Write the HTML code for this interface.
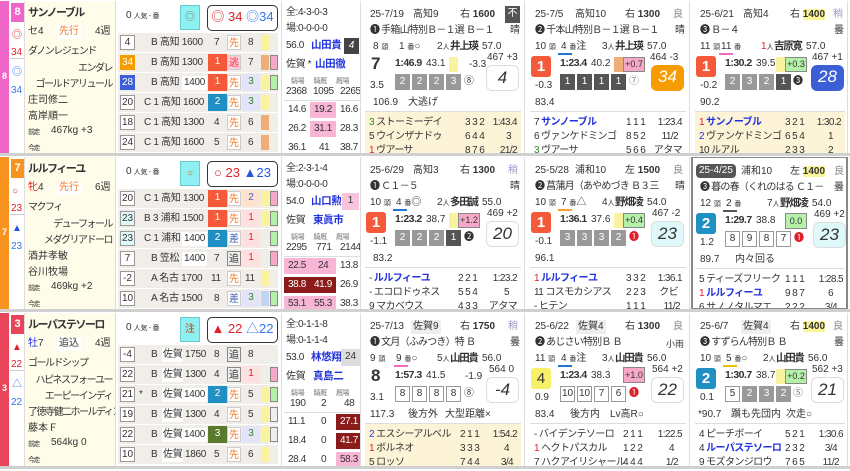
<!DOCTYPE html><html><head><meta charset="utf-8"><style>
*{margin:0;padding:0;box-sizing:border-box}
body{width:850px;height:471px;background:#fff;font-family:"Liberation Sans","Noto Sans CJK JP",sans-serif;font-size:10px;color:#333;position:relative;overflow:hidden}
.row{position:absolute;left:0;width:850px;height:153px}
.sep{position:absolute;left:0;width:850px;height:3px;background:#d0d0d0}
.a{position:absolute;white-space:nowrap;line-height:14px}
.strip{position:absolute;left:0;top:0;width:9px;height:153px;color:#fff;font-size:9px;font-weight:bold;text-align:center;padding-top:70px}
.mk{position:absolute;left:9px;top:0;width:16px;height:153px;background:#fff;border-right:1px solid #ddd}
.nb{position:absolute;left:2px;top:2px;width:13px;height:19px;color:#fff;font-weight:bold;text-align:center;line-height:19px;font-size:11px}
.nm{position:absolute;left:25px;top:0;width:91px;height:153px;background:#fffcea;border-right:1px solid #ddd;overflow:hidden}
.nm .a{letter-spacing:-1.5px}
.od{position:absolute;left:116px;top:0;width:166px;height:153px;background:#fff;border-right:1px solid #ddd}
.od .a{letter-spacing:-0.3px}
.rr{position:absolute;left:2px;width:160px;height:19px;background:#f1eee9}
.bx{position:absolute;text-align:center;line-height:15px}
.st{position:absolute;left:282px;top:0;width:79px;height:153px;border-right:1px solid #ddd;overflow:hidden}
.st .a{letter-spacing:-0.4px}
.race{position:absolute;top:0;width:164px;height:153px;border-right:1px solid #ddd;overflow:hidden}
.cb{position:absolute;top:73px;width:15px;height:16px;background:#999;color:#fff;text-align:center;line-height:16px;font-size:10px}
.cw{background:#fff;color:#333;border:1px solid #999;line-height:14px}
.cd{background:#555}
.fin{position:absolute;left:5px;top:55px;width:20px;height:21px;border-radius:3px;color:#fff;font-size:15px;font-weight:bold;text-align:center;line-height:21px}
.big{position:absolute;left:125px;top:64px;width:33px;height:26px;border:1px solid #ddd;border-radius:6px;font-style:italic;font-size:17px;text-align:center;line-height:24px}
.res{position:absolute;left:4px;top:110px;width:156px;height:43px;border-top:1px solid #ddd}
.res .a{letter-spacing:-0.6px}
.rn{letter-spacing:-0.8px}
.jk{font-weight:bold;font-size:10.5px;letter-spacing:-1.3px}
.sm{font-size:7px}
.blue{color:#2233dd}
.red{color:#e0202a}
.grn{color:#2a8a2a}
b{font-weight:bold}
.tm{font-weight:bold;font-size:10.5px;letter-spacing:-0.5px}
</style></head><body>

<!-- ROW 1 -->
<div class="row" style="top:1px">
<div class="strip" style="background:#f066c8">8</div>
<div class="mk"><div class="nb" style="background:#f066c8">8</div>
<span class="a red" style="left:3px;top:28px">◎</span><span class="a red" style="left:2px;top:45px;font-size:10px">34</span>
<div style="position:absolute;left:1px;top:57px;width:14px;height:1px;background:#ccc"></div>
<span class="a" style="left:3px;top:65px;color:#3377ee">◎</span><span class="a" style="left:2px;top:83px;font-size:10px;color:#3377ee">34</span></div>
<div class="nm">
<span class="a" style="left:3px;top:5px;font-weight:bold;font-size:11px">サンノーブル</span>
<span class="a" style="left:3px;top:24px;letter-spacing:0">セ4</span><span class="a" style="left:32px;top:24px;color:#f07a30;background:#fff;padding:0 2px;letter-spacing:0">先行</span><span class="a" style="left:70px;top:24px;letter-spacing:0">4週</span>
<span class="a" style="left:3px;top:44px">ダノンレジェンド</span>
<span class="a" style="right:3px;top:61px">エンダレ</span>
<span class="a" style="right:3px;top:77px">ゴールドアリュール</span>
<span class="a" style="left:3px;top:93px;letter-spacing:0">庄司修二</span>
<span class="a" style="left:3px;top:109px;letter-spacing:0">高岸順一</span>
<span class="a sm" style="left:3px;top:125px">前走</span><span class="a" style="left:26px;top:123px;letter-spacing:0">467kg +3</span>
<span class="a sm" style="left:3px;top:141px">今走</span></div>
<div class="od">
<span class="a" style="left:10px;top:8px">0 <span class="sm">人気 - 番</span></span>
<div class="bx" style="left:64px;top:4px;width:20px;height:25px;background:#8ef0f2;border:1px solid #6cc;line-height:23px;color:#777">◎</div>
<div class="bx" style="left:91px;top:4px;width:71px;height:26px;border:1.5px solid #333;border-radius:5px;line-height:22px;font-size:13px"><span class="red">◎ 34</span> <span style="color:#3377ee">◎34</span></div>
<div class="rr" style="top:32px"><div class="bx" style="left:2px;top:2px;width:15px;height:15px;background:#fff;border:1px solid #999;line-height:13px">4</div><span class="a" style="left:33px;top:3px">B 高知 1600</span><span class="a" style="left:96px;top:3px">7</span><div class="bx" style="left:109px;top:2px;width:14px;height:15px;background:#fff;border:1px solid #ccc;color:#f07a30">先</div><span class="a" style="left:130px;top:3px">8</span><div class="bx" style="left:143px;top:2px;width:8px;height:15px;background:#f9f3a0"></div></div>
<div class="rr" style="top:52px"><div class="bx" style="left:2px;top:2px;width:15px;height:15px;background:#f59c00;color:#fff">34</div><span class="a" style="left:33px;top:3px">B 高知 1300</span><div class="bx" style="left:90px;top:1px;width:19px;height:17px;background:#f4593a;color:#fff">1</div><div class="bx" style="left:109px;top:2px;width:14px;height:15px;background:#fcd;border:1px solid #ccc;color:#e33">逃</div><span class="a" style="left:130px;top:3px">7</span><div class="bx" style="left:143px;top:2px;width:8px;height:15px;background:#efae78"></div><div class="bx" style="left:152px;top:2px;width:8px;height:15px;background:#f7a8c8;border:1px solid #888"></div></div>
<div class="rr" style="top:72px"><div class="bx" style="left:2px;top:2px;width:15px;height:15px;background:#3d5fd6;color:#fff">28</div><span class="a" style="left:33px;top:3px">B 高知</span><span class="a" style="left:64px;top:3px;background:#fff;padding:0 2px">1400</span><div class="bx" style="left:90px;top:1px;width:19px;height:17px;background:#f4593a;color:#fff">1</div><div class="bx" style="left:109px;top:2px;width:14px;height:15px;background:#fff;border:1px solid #ccc;color:#f07a30">先</div><div class="bx grn" style="left:124px;top:1px;width:18px;height:17px;background:#e4e4f8">3</div><div class="bx" style="left:143px;top:2px;width:8px;height:15px;background:#f9f3a0"></div><div class="bx" style="left:152px;top:2px;width:8px;height:15px;background:#b5f0a8;border:1px solid #888"></div></div>
<div class="rr" style="top:92px"><div class="bx" style="left:2px;top:2px;width:15px;height:15px;background:#fff;border:1px solid #999;line-height:13px">20</div><span class="a" style="left:26px;top:3px">C 1 高知 1600</span><div class="bx" style="left:90px;top:1px;width:19px;height:17px;background:#1f8fc4;color:#fff">2</div><div class="bx" style="left:109px;top:2px;width:14px;height:15px;background:#fff;border:1px solid #ccc;color:#f07a30">先</div><div class="bx grn" style="left:124px;top:1px;width:18px;height:17px;background:#e4e4f8">3</div><div class="bx" style="left:143px;top:2px;width:8px;height:15px;background:#f9f3a0"></div></div>
<div class="rr" style="top:112px"><div class="bx" style="left:2px;top:2px;width:15px;height:15px;background:#fff;border:1px solid #999;line-height:13px">18</div><span class="a" style="left:26px;top:3px">C 1 高知 1300</span><span class="a" style="left:96px;top:3px">4</span><div class="bx" style="left:109px;top:2px;width:14px;height:15px;background:#fff;border:1px solid #ccc;color:#f07a30">先</div><span class="a" style="left:130px;top:3px">6</span><div class="bx" style="left:143px;top:2px;width:8px;height:15px;background:#efae78"></div></div>
<div class="rr" style="top:132px"><div class="bx" style="left:2px;top:2px;width:15px;height:15px;background:#fff;border:1px solid #999;line-height:13px">24</div><span class="a" style="left:26px;top:3px">C 1 高知 1600</span><span class="a" style="left:96px;top:3px">5</span><div class="bx" style="left:109px;top:2px;width:14px;height:15px;background:#fff;border:1px solid #ccc;color:#f07a30">先</div><span class="a" style="left:130px;top:3px">6</span><div class="bx" style="left:143px;top:2px;width:8px;height:15px;background:#efae78"></div></div>
</div>
<div class="st">
<span class="a" style="left:4px;top:5px">全:4-3-0-3</span>
<span class="a" style="left:4px;top:21px">場:0-0-0-0</span>
<span class="a" style="left:4px;top:38px">56.0</span><span class="a blue jk" style="left:29px;top:37px">山田貴</span><div class="bx" style="left:62px;top:37px;width:15px;height:16px;background:#444;color:#fff;font-style:italic">4</div>
<span class="a" style="left:4px;top:57px">佐賀 *</span><span class="a blue jk" style="left:33px;top:56px">山田徹</span>
<span class="a" style="left:9px;top:74px;color:#777;font-size:7px">騎場&nbsp;&nbsp;&nbsp;&nbsp;&nbsp;&nbsp;騎厩&nbsp;&nbsp;&nbsp;&nbsp;&nbsp;&nbsp;厩場</span>
<span class="a" style="left:4px;top:84px">2368</span><span class="a" style="left:31px;top:84px">1095</span><span class="a" style="left:58px;top:84px">2265</span>
<div style="position:absolute;left:2px;top:99px;width:76px;height:1px;background:#ddd"></div>
<span class="a" style="left:6px;top:102px">14.6</span><span class="a" style="left:28px;top:101px;background:#f9b5d5;padding:1px 4px">19.2</span><span class="a" style="left:58px;top:102px">16.6</span>
<span class="a" style="left:6px;top:121px">26.2</span><span class="a" style="left:28px;top:120px;background:#f9b5d5;padding:1px 4px">31.1</span><span class="a" style="left:58px;top:121px">28.3</span>
<span class="a" style="left:6px;top:140px">36.1</span><span class="a" style="left:37px;top:140px">41</span><span class="a" style="left:58px;top:140px">38.7</span>
</div>
<!-- races -->
<div class="race" style="left:361px">
<span class="a" style="left:9px;top:7px">25-7/19</span><span class="a" style="left:52px;top:7px">高知9</span><span class="a" style="left:99px;top:7px">右 <b>1600</b></span><div class="bx" style="left:144px;top:5px;width:15px;height:17px;background:#555;color:#fff">不</div>
<span class="a rn" style="left:9px;top:23px">❶ 手箱山特別Ｂ－１選 Ｂ－１</span><span class="a" style="left:149px;top:23px;background:#fff">晴</span>
<span class="a" style="left:12px;top:39px">8 <span class="sm">頭</span></span><span class="a" style="left:38px;top:39px">1 <span class="sm">番</span>○</span><span class="a" style="left:76px;top:39px">2<span class="sm">人</span></span><span class="a jk" style="left:89px;top:38px">井上瑛</span><span class="a" style="left:121px;top:39px">57.0</span>
<span class="a" style="left:10px;top:56px;font-size:17px;font-weight:bold">7</span>
<span class="a tm" style="left:34px;top:55px">1:46.9</span><span class="a" style="left:65px;top:56px">43.1</span><div class="bx" style="left:88px;top:56px;width:9px;height:15px;background:#f9f3a0"></div><span class="a" style="left:108px;top:57px">-3.3</span>
<span class="a" style="left:126px;top:50px">467 +3</span><div class="big">4</div>
<span class="a" style="left:9px;top:78px">3.5</span>
<div class="cb" style="left:34px">2</div><div class="cb" style="left:51px">2</div><div class="cb" style="left:68px">2</div><div class="cb" style="left:85px">3</div><span class="a" style="left:103px;top:74px">⑧</span>
<span class="a" style="left:12px;top:95px">106.9</span><span class="a" style="left:47px;top:95px">大逃げ</span>
<div class="res" style="background:#fdf3d7"><span class="a" style="left:4px;top:4px"><span class="grn">3</span> ストーミーデイ</span><span class="a" style="left:100px;top:4px">3 3 2</span><span class="a" style="right:4px;top:4px">1:43.4</span>
<span class="a" style="left:4px;top:18px">5 ウインザナドゥ</span><span class="a" style="left:100px;top:18px">6 4 4</span><span class="a" style="right:10px;top:18px">3</span>
<span class="a" style="left:4px;top:32px"><span class="red">1</span> ヴアーサ</span><span class="a" style="left:100px;top:32px">8 7 6</span><span class="a" style="right:4px;top:32px">21/2</span></div>
</div>
<div class="race" style="left:526px">
<span class="a" style="left:9px;top:7px">25-7/5</span><span class="a" style="left:49px;top:7px">高知10</span><span class="a" style="left:99px;top:7px">右 <b>1300</b></span><span class="a" style="left:147px;top:7px;color:#888">良</span>
<span class="a rn" style="left:9px;top:23px">❷ 千本山特別Ｂ－１選 Ｂ－１</span><span class="a" style="left:149px;top:23px;background:#fff">晴</span>
<span class="a" style="left:9px;top:39px">10 <span class="sm">頭</span></span><span class="a" style="left:35px;top:39px">4 <span class="sm">番</span>注</span><span class="a" style="left:76px;top:39px">3<span class="sm">人</span></span><span class="a jk" style="left:89px;top:38px">井上瑛</span><span class="a" style="left:121px;top:39px">57.0</span><div style="position:absolute;left:32px;top:52px;width:14px;height:2px;background:#2277cc"></div>
<div class="fin" style="background:#f4593a">1</div>
<span class="a tm" style="left:34px;top:55px">1:23.4</span><span class="a" style="left:65px;top:56px">40.2</span><div class="bx" style="left:88px;top:56px;width:9px;height:15px;background:#efae78"></div><div class="bx" style="left:97px;top:56px;width:22px;height:15px;background:#f7a8c8;border:1px solid #888;font-size:9px;line-height:13px">+0.7</div>
<span class="a" style="left:124px;top:50px">464 -3</span><div class="big" style="background:#f59c00;color:#fff;border:none">34</div>
<span class="a" style="left:9px;top:78px">-0.3</span>
<div class="cb cd" style="left:34px">1</div><div class="cb cd" style="left:51px">1</div><div class="cb cd" style="left:68px">1</div><div class="cb cd" style="left:85px">1</div><span class="a" style="left:103px;top:74px;color:#888">⑦</span>
<span class="a" style="left:9px;top:95px">83.4</span>
<div class="res"><span class="a" style="left:4px;top:4px">7 <b class="blue">サンノーブル</b></span><span class="a" style="left:96px;top:4px">1 1 1</span><span class="a" style="right:4px;top:4px">1:23.4</span>
<span class="a" style="left:4px;top:18px">6 ヴァンケドミンゴ</span><span class="a" style="left:96px;top:18px">8 5 2</span><span class="a" style="right:8px;top:18px">11/2</span>
<span class="a" style="left:4px;top:32px"><span class="grn">3</span> ヴアーサ</span><span class="a" style="left:96px;top:32px">5 6 6</span><span class="a" style="right:4px;top:32px">アタマ</span></div>
</div>
<div class="race" style="left:691px;width:157px">
<span class="a" style="left:9px;top:7px">25-6/21</span><span class="a" style="left:52px;top:7px">高知4</span><span class="a" style="left:99px;top:7px">右 <b style="background:#fbf59a">1400</b></span><span class="a" style="left:142px;top:7px;color:#99c">稍</span>
<span class="a rn" style="left:9px;top:23px">❸ Ｂ－４</span><span class="a" style="left:143px;top:23px">曇</span>
<span class="a" style="left:9px;top:39px">11 <span class="sm">頭</span></span><span class="a" style="left:30px;top:39px">11 <span class="sm">番</span></span><span class="a" style="left:70px;top:39px"><span class="red">1</span><span class="sm">人</span></span><span class="a jk" style="left:83px;top:38px">吉原寛</span><span class="a" style="left:115px;top:39px">57.0</span><div style="position:absolute;left:28px;top:52px;width:14px;height:2px;background:#f06cc8"></div>
<div class="fin" style="background:#f4593a">1</div>
<span class="a tm" style="left:34px;top:55px">1:30.2</span><span class="a" style="left:65px;top:56px">39.5</span><div class="bx" style="left:85px;top:56px;width:9px;height:15px;background:#f9f3a0"></div><div class="bx" style="left:94px;top:56px;width:22px;height:15px;background:#b5f0a8;border:1px solid #888;font-size:9px;line-height:13px">+0.3</div>
<span class="a" style="left:121px;top:50px">467 +1</span><div class="big" style="left:120px;background:#3d5fd6;color:#fff;border:none">28</div>
<span class="a" style="left:9px;top:78px">-0.2</span>
<div class="cb" style="left:34px">2</div><div class="cb" style="left:51px">3</div><div class="cb" style="left:68px">2</div><div class="cb cd" style="left:85px">1</div><span class="a" style="left:102px;top:74px">❸</span>
<span class="a" style="left:9px;top:95px">90.2</span>
<div class="res" style="background:#fdf3d7;width:150px"><span class="a" style="left:4px;top:4px"><span class="red">1</span> <b class="blue">サンノーブル</b></span><span class="a" style="left:90px;top:4px">3 2 1</span><span class="a" style="right:4px;top:4px">1:30.2</span>
<span class="a" style="left:4px;top:18px"><span class="blue">2</span> ヴァンケドミンゴ</span><span class="a" style="left:90px;top:18px">6 5 4</span><span class="a" style="right:12px;top:18px">1</span>
<span class="a" style="left:4px;top:32px">10 ルアル</span><span class="a" style="left:90px;top:32px">2 3 3</span><span class="a" style="right:12px;top:32px">2</span></div>
</div>
</div>
<div class="sep" style="top:153px"></div>

<!-- ROW 2 -->
<div class="row" style="top:157px">
<div class="strip" style="background:#f7931e">7</div>
<div class="mk"><div class="nb" style="background:#f7931e">7</div>
<span class="a red" style="left:3px;top:28px">○</span><span class="a red" style="left:2px;top:45px;font-size:10px">23</span>
<div style="position:absolute;left:1px;top:57px;width:14px;height:1px;background:#ccc"></div>
<span class="a" style="left:3px;top:65px;color:#2255dd">▲</span><span class="a" style="left:2px;top:83px;font-size:10px;color:#3377ee">23</span></div>
<div class="nm">
<span class="a" style="left:3px;top:5px;font-weight:bold;font-size:11px">ルルフィーユ</span>
<span class="a" style="left:3px;top:24px;letter-spacing:0"><span class="red">牝</span>4</span><span class="a" style="left:32px;top:24px;color:#f07a30;background:#fff;padding:0 2px;letter-spacing:0">先行</span><span class="a" style="left:70px;top:24px;letter-spacing:0">6週</span>
<span class="a" style="left:3px;top:44px">マクフィ</span>
<span class="a" style="right:3px;top:61px">デューフォール</span>
<span class="a" style="right:3px;top:77px">メダグリアドーロ</span>
<span class="a" style="left:3px;top:93px;letter-spacing:0">酒井孝敏</span>
<span class="a" style="left:3px;top:109px;letter-spacing:0">谷川牧場</span>
<span class="a sm" style="left:3px;top:125px">前走</span><span class="a" style="left:26px;top:123px;letter-spacing:0">469kg +2</span>
<span class="a sm" style="left:3px;top:141px">今走</span></div>
<div class="od">
<span class="a" style="left:10px;top:8px">0 <span class="sm">人気 - 番</span></span>
<div class="bx" style="left:64px;top:4px;width:20px;height:25px;background:#8ef0f2;border:1px solid #6cc;line-height:23px;color:#c60">○</div>
<div class="bx" style="left:91px;top:4px;width:71px;height:26px;border:1.5px solid #333;border-radius:5px;line-height:22px;font-size:13px"><span class="red">○ 23</span> <span style="color:#2255dd">▲23</span></div>
<div class="rr" style="top:32px"><div class="bx" style="left:2px;top:2px;width:15px;height:15px;background:#fff;border:1px solid #999;line-height:13px">20</div><span class="a" style="left:26px;top:3px">C 1 高知 1300</span><div class="bx" style="left:90px;top:1px;width:19px;height:17px;background:#f4593a;color:#fff">1</div><div class="bx" style="left:109px;top:2px;width:14px;height:15px;background:#fff;border:1px solid #ccc;color:#f07a30">先</div><div class="bx" style="left:124px;top:1px;width:18px;height:17px;background:#fde3cc;color:#55c">2</div><div class="bx" style="left:143px;top:2px;width:8px;height:15px;background:#f9f3a0"></div><div class="bx" style="left:152px;top:2px;width:8px;height:15px;background:#f7a8c8;border:1px solid #888"></div></div>
<div class="rr" style="top:52px"><div class="bx" style="left:2px;top:2px;width:15px;height:15px;background:#dff8fa;border:1px solid #999;line-height:13px">23</div><span class="a" style="left:26px;top:3px">B 3 浦和 1500</span><div class="bx" style="left:90px;top:1px;width:19px;height:17px;background:#f4593a;color:#fff">1</div><div class="bx" style="left:109px;top:2px;width:14px;height:15px;background:#fff;border:1px solid #ccc;color:#f07a30">先</div><div class="bx red" style="left:124px;top:1px;width:18px;height:17px;background:#fde0e0">1</div><div class="bx" style="left:143px;top:2px;width:8px;height:15px;background:#f9f3a0"></div><div class="bx" style="left:152px;top:2px;width:8px;height:15px;background:#b5f0a8;border:1px solid #888"></div></div>
<div class="rr" style="top:72px"><div class="bx" style="left:2px;top:2px;width:15px;height:15px;background:#dff8fa;border:1px solid #999;line-height:13px">23</div><span class="a" style="left:26px;top:3px">C 1 浦和</span><span class="a" style="left:64px;top:3px;background:#fff;padding:0 2px">1400</span><div class="bx" style="left:90px;top:1px;width:19px;height:17px;background:#1f8fc4;color:#fff">2</div><div class="bx" style="left:109px;top:2px;width:14px;height:15px;background:#fff;border:1px solid #ccc;color:#35a">差</div><div class="bx red" style="left:124px;top:1px;width:18px;height:17px;background:#fde0e0">1</div><div class="bx" style="left:152px;top:2px;width:8px;height:15px;background:#b5f0a8;border:1px solid #888"></div></div>
<div class="rr" style="top:92px"><div class="bx" style="left:2px;top:2px;width:15px;height:15px;background:#fff;border:1px solid #999;line-height:13px">7</div><span class="a" style="left:33px;top:3px">B 笠松</span><span class="a" style="left:64px;top:3px;background:#fff;padding:0 2px">1400</span><span class="a" style="left:96px;top:3px">7</span><div class="bx" style="left:109px;top:2px;width:14px;height:15px;background:#eee;border:1px solid #888">追</div><div class="bx red" style="left:124px;top:1px;width:18px;height:17px;background:#fde0e0">1</div><div class="bx" style="left:152px;top:2px;width:8px;height:15px;background:#f7a8c8;border:1px solid #888"></div></div>
<div class="rr" style="top:112px"><div class="bx" style="left:2px;top:2px;width:15px;height:15px;background:#fff;border:1px solid #999;line-height:13px">-2</div><span class="a" style="left:33px;top:3px">A 名古 1700</span><span class="a" style="left:93px;top:3px">11</span><div class="bx" style="left:109px;top:2px;width:14px;height:15px;background:#fff;border:1px solid #ccc;color:#f07a30">先</div><span class="a" style="left:127px;top:3px">11</span><div class="bx" style="left:143px;top:2px;width:8px;height:15px;background:#f9f3a0"></div></div>
<div class="rr" style="top:132px"><div class="bx" style="left:2px;top:2px;width:15px;height:15px;background:#fff;border:1px solid #999;line-height:13px">10</div><span class="a" style="left:33px;top:3px">A 名古 1500</span><span class="a" style="left:96px;top:3px">8</span><div class="bx" style="left:109px;top:2px;width:14px;height:15px;background:#fff;border:1px solid #ccc;color:#35a">差</div><div class="bx grn" style="left:124px;top:1px;width:18px;height:17px;background:#e4e4f8">3</div><div class="bx" style="left:143px;top:2px;width:8px;height:15px;background:#c0d4f4"></div><div class="bx" style="left:152px;top:2px;width:8px;height:15px;background:#b5f0a8;border:1px solid #888"></div></div>
</div>
<div class="st">
<span class="a" style="left:4px;top:5px">全:2-3-1-4</span>
<span class="a" style="left:4px;top:21px">場:0-0-0-0</span>
<span class="a" style="left:4px;top:38px">54.0</span><span class="a blue jk" style="left:29px;top:37px">山口勲</span><div class="bx" style="left:60px;top:36px;width:17px;height:17px;background:#f9c5dd">1</div>
<span class="a" style="left:4px;top:57px">佐賀</span><span class="a blue jk" style="left:31px;top:56px">東眞市</span>
<span class="a" style="left:9px;top:74px;color:#777;font-size:7px">騎場&nbsp;&nbsp;&nbsp;&nbsp;&nbsp;&nbsp;騎厩&nbsp;&nbsp;&nbsp;&nbsp;&nbsp;&nbsp;厩場</span>
<span class="a" style="left:4px;top:84px">2295</span><span class="a" style="left:34px;top:84px">771</span><span class="a" style="left:58px;top:84px">2144</span>
<div style="position:absolute;left:2px;top:99px;width:76px;height:1px;background:#ddd"></div>
<span class="a" style="left:2px;top:101px;background:#f9b5d5;padding:1px 4px">22.5</span><span class="a" style="left:28px;top:101px;background:#f9b5d5;padding:1px 8px">24</span><span class="a" style="left:58px;top:102px">13.8</span>
<span class="a" style="left:2px;top:120px;background:#8b1a1a;color:#fff;padding:1px 4px">38.8</span><span class="a" style="left:28px;top:120px;background:#8b1a1a;color:#fff;padding:1px 4px">41.9</span><span class="a" style="left:58px;top:121px">26.9</span>
<span class="a" style="left:2px;top:139px;background:#f9b5d5;padding:1px 4px">53.1</span><span class="a" style="left:28px;top:139px;background:#f9b5d5;padding:1px 4px">55.3</span><span class="a" style="left:58px;top:140px">38.3</span>
</div>
<div class="race" style="left:361px">
<span class="a" style="left:9px;top:7px">25-6/29</span><span class="a" style="left:52px;top:7px">高知3</span><span class="a" style="left:99px;top:7px">右 <b>1300</b></span><span class="a" style="left:147px;top:7px;color:#99c">稍</span>
<span class="a rn" style="left:9px;top:23px">❶ Ｃ１－５</span><span class="a" style="left:149px;top:23px">晴</span>
<span class="a" style="left:9px;top:39px">10 <span class="sm">頭</span></span><span class="a" style="left:35px;top:39px">4 <span class="sm">番</span>◎</span><span class="a" style="left:76px;top:39px">2<span class="sm">人</span></span><span class="a jk" style="left:89px;top:38px">多田誠</span><span class="a" style="left:121px;top:39px">55.0</span><div style="position:absolute;left:32px;top:52px;width:14px;height:2px;background:#2277cc"></div>
<div class="fin" style="background:#f4593a">1</div>
<span class="a tm" style="left:34px;top:55px">1:23.2</span><span class="a" style="left:65px;top:56px">38.7</span><div class="bx" style="left:88px;top:56px;width:9px;height:15px;background:#f9f3a0"></div><div class="bx" style="left:97px;top:56px;width:22px;height:15px;background:#f7a8c8;border:1px solid #888;font-size:9px;line-height:13px">+1.2</div>
<span class="a" style="left:126px;top:50px">469 +2</span><div class="big">20</div>
<span class="a" style="left:9px;top:78px">-1.1</span>
<div class="cb" style="left:34px">2</div><div class="cb" style="left:51px">2</div><div class="cb" style="left:68px">2</div><div class="cb cd" style="left:85px">1</div><span class="a" style="left:103px;top:74px">❷</span>
<span class="a" style="left:12px;top:95px">83.2</span>
<div class="res"><span class="a" style="left:4px;top:4px">- <b class="blue">ルルフィーユ</b></span><span class="a" style="left:93px;top:4px">2 2 1</span><span class="a" style="right:4px;top:4px">1:23.2</span>
<span class="a" style="left:4px;top:18px">- エコロドゥネス</span><span class="a" style="left:93px;top:18px">5 5 4</span><span class="a" style="right:12px;top:18px">5</span>
<span class="a" style="left:4px;top:32px">9 マカベウス</span><span class="a" style="left:93px;top:32px">4 3 3</span><span class="a" style="right:4px;top:32px">アタマ</span></div>
</div>
<div class="race" style="left:526px">
<span class="a" style="left:9px;top:7px">25-5/28</span><span class="a" style="left:49px;top:7px">浦和10</span><span class="a" style="left:99px;top:7px">左 <b>1500</b></span><span class="a" style="left:147px;top:7px;color:#888">良</span>
<span class="a rn" style="left:9px;top:23px;width:135px;overflow:hidden">❷ 菖蒲月（あやめづき Ｂ３三</span><span class="a" style="left:149px;top:23px">晴</span>
<span class="a" style="left:9px;top:39px">10 <span class="sm">頭</span></span><span class="a" style="left:35px;top:39px">7 <span class="sm">番</span>△</span><span class="a" style="left:76px;top:39px">4<span class="sm">人</span></span><span class="a jk" style="left:89px;top:38px">野畑凌</span><span class="a" style="left:121px;top:39px">54.0</span><div style="position:absolute;left:32px;top:52px;width:14px;height:2px;background:#f7a030"></div>
<div class="fin" style="background:#f4593a">1</div>
<span class="a tm" style="left:34px;top:55px">1:36.1</span><span class="a" style="left:65px;top:56px">37.6</span><div class="bx" style="left:88px;top:56px;width:9px;height:15px;background:#f9f3a0"></div><div class="bx" style="left:97px;top:56px;width:22px;height:15px;background:#b5f0a8;border:1px solid #888;font-size:9px;line-height:13px">+0.4</div>
<span class="a" style="left:126px;top:50px">467 -2</span><div class="big" style="background:#dff8fa">23</div>
<span class="a" style="left:9px;top:78px">-0.1</span>
<div class="cb" style="left:34px">3</div><div class="cb" style="left:51px">3</div><div class="cb" style="left:68px">3</div><div class="cb" style="left:85px">2</div><span class="a red" style="left:103px;top:74px">❶</span>
<span class="a" style="left:9px;top:95px">96.1</span>
<div class="res"><span class="a" style="left:4px;top:4px"><span class="red">1</span> <b class="blue">ルルフィーユ</b></span><span class="a" style="left:96px;top:4px">3 3 2</span><span class="a" style="right:4px;top:4px">1:36.1</span>
<span class="a" style="left:4px;top:18px">11 コスモカシアス</span><span class="a" style="left:96px;top:18px">2 2 3</span><span class="a" style="right:8px;top:18px">クビ</span>
<span class="a" style="left:4px;top:32px">- ヒテン</span><span class="a" style="left:96px;top:32px">1 1 1</span><span class="a" style="right:6px;top:32px">11/2</span></div>
</div>
<div class="race" style="left:691px;width:157px;border:2px solid #888;border-top:1px solid #888">
<span class="a" style="left:3px;top:6px;background:#555;color:#fff;border-radius:4px;padding:0 3px">25-4/25</span><span class="a" style="left:48px;top:7px">浦和10</span><span class="a" style="left:97px;top:7px">左 <b style="background:#fbf59a">1400</b></span><span class="a" style="left:141px;top:7px;color:#888">良</span>
<span class="a rn" style="left:7px;top:23px;width:128px;overflow:hidden">❸ 暮の春（くれのはる Ｃ１－</span><span class="a" style="left:141px;top:23px">曇</span>
<span class="a" style="left:7px;top:39px">12 <span class="sm">頭</span></span><span class="a" style="left:33px;top:39px">2 <span class="sm">番</span></span><span class="a" style="left:74px;top:39px">7<span class="sm">人</span></span><span class="a jk" style="left:87px;top:38px">野畑凌</span><span class="a" style="left:119px;top:39px">54.0</span><div style="position:absolute;left:30px;top:52px;width:14px;height:2px;background:#555"></div>
<div class="fin" style="left:3px;background:#1f8fc4">2</div>
<span class="a tm" style="left:32px;top:55px">1:29.7</span><span class="a" style="left:63px;top:56px">38.8</span><div class="bx" style="left:92px;top:55px;width:22px;height:16px;background:#b5f0a8;border:1px solid #888;font-size:9px;line-height:14px">0.0</div>
<span class="a" style="left:121px;top:50px">469 +2</span><div class="big" style="left:120px;background:#dff8fa">23</div>
<span class="a" style="left:7px;top:78px">1.2</span>
<div class="cb cw" style="left:32px">8</div><div class="cb cw" style="left:49px">9</div><div class="cb cw" style="left:66px">8</div><div class="cb cw" style="left:83px">7</div><span class="a red" style="left:101px;top:74px">❶</span>
<span class="a" style="left:7px;top:95px">89.7</span><span class="a" style="left:42px;top:95px">内々回る</span>
<div class="res" style="left:2px;width:150px"><span class="a" style="left:4px;top:4px">5 ティーズフリーク</span><span class="a" style="left:90px;top:4px">1 1 1</span><span class="a" style="right:2px;top:4px">1:28.5</span>
<span class="a" style="left:4px;top:18px"><span class="red">1</span> <b class="blue">ルルフィーユ</b></span><span class="a" style="left:90px;top:18px">9 8 7</span><span class="a" style="right:12px;top:18px">6</span>
<span class="a" style="left:4px;top:32px">6 サノノタルマエ</span><span class="a" style="left:90px;top:32px">2 2 2</span><span class="a" style="right:8px;top:32px">3/4</span></div>
</div>
</div>
<div class="sep" style="top:309px"></div>

<!-- ROW 3 -->
<div class="row" style="top:313px">
<div class="strip" style="background:#e8455a">3</div>
<div class="mk"><div class="nb" style="background:#e8455a">3</div>
<span class="a red" style="left:3px;top:28px">▲</span><span class="a red" style="left:2px;top:45px;font-size:10px">22</span>
<div style="position:absolute;left:1px;top:57px;width:14px;height:1px;background:#ccc"></div>
<span class="a" style="left:3px;top:65px;color:#3377ee">△</span><span class="a" style="left:2px;top:83px;font-size:10px;color:#3377ee">22</span></div>
<div class="nm">
<span class="a" style="left:3px;top:5px;font-weight:bold;font-size:11px">ルーパステソーロ</span>
<span class="a" style="left:3px;top:24px;letter-spacing:0"><span class="blue">牡</span>7</span><span class="a" style="left:32px;top:24px;background:#fff;padding:0 2px;letter-spacing:0">追込</span><span class="a" style="left:70px;top:24px;letter-spacing:0">4週</span>
<span class="a" style="left:3px;top:44px">ゴールドシップ</span>
<span class="a" style="right:3px;top:61px">ハピネスフォーユー</span>
<span class="a" style="right:3px;top:77px">エーピーインディ</span>
<span class="a" style="left:3px;top:93px">了徳寺健二ホールディング</span>
<span class="a" style="left:3px;top:109px;letter-spacing:0">藤本Ｆ</span>
<span class="a sm" style="left:3px;top:125px">前走</span><span class="a" style="left:26px;top:123px;letter-spacing:0">564kg 0</span>
<span class="a sm" style="left:3px;top:141px">今走</span></div>
<div class="od">
<span class="a" style="left:10px;top:8px">0 <span class="sm">人気 - 番</span></span>
<div class="bx" style="left:64px;top:4px;width:20px;height:25px;background:#8ef0f2;border:1px solid #6cc;line-height:23px;color:#c30">注</div>
<div class="bx" style="left:91px;top:4px;width:71px;height:26px;border:1.5px solid #333;border-radius:5px;line-height:22px;font-size:13px"><span class="red">▲ 22</span> <span style="color:#3377ee">△22</span></div>
<div class="rr" style="top:32px"><div class="bx" style="left:2px;top:2px;width:15px;height:15px;background:#fff;border:1px solid #999;line-height:13px">-4</div><span class="a" style="left:33px;top:3px">B</span><span class="a" style="left:44px;top:3px;background:#fff;padding:0 1px">佐賀</span><span class="a" style="left:67px;top:3px">1750</span><span class="a" style="left:96px;top:3px">8</span><div class="bx" style="left:109px;top:2px;width:14px;height:15px;background:#eee;border:1px solid #888">追</div><span class="a" style="left:130px;top:3px">8</span><div class="bx" style="left:143px;top:2px;width:8px;height:15px;background:#eee"></div></div>
<div class="rr" style="top:52px"><div class="bx" style="left:2px;top:2px;width:15px;height:15px;background:#fff;border:1px solid #999;line-height:13px">22</div><span class="a" style="left:33px;top:3px">B</span><span class="a" style="left:44px;top:3px;background:#fff;padding:0 1px">佐賀</span><span class="a" style="left:67px;top:3px">1300</span><span class="a" style="left:96px;top:3px">4</span><div class="bx" style="left:109px;top:2px;width:14px;height:15px;background:#eee;border:1px solid #888">追</div><div class="bx red" style="left:124px;top:1px;width:18px;height:17px;background:#fde0e0">1</div><div class="bx" style="left:152px;top:2px;width:8px;height:15px;background:#f7a8c8;border:1px solid #888"></div></div>
<div class="rr" style="top:72px"><div class="bx" style="left:2px;top:2px;width:15px;height:15px;background:#fff;border:1px solid #999;line-height:13px">21</div><span class="a" style="left:21px;top:3px">*</span><span class="a" style="left:33px;top:3px">B</span><span class="a" style="left:44px;top:3px;background:#fff;padding:0 1px">佐賀</span><span class="a" style="left:64px;top:3px;background:#fff;padding:0 2px">1400</span><div class="bx" style="left:90px;top:1px;width:19px;height:17px;background:#1f8fc4;color:#fff">2</div><div class="bx" style="left:109px;top:2px;width:14px;height:15px;background:#fff;border:1px solid #ccc;color:#f07a30">先</div><span class="a" style="left:130px;top:3px">5</span><div class="bx" style="left:143px;top:2px;width:8px;height:15px;background:#f9f3a0"></div><div class="bx" style="left:152px;top:2px;width:8px;height:15px;background:#b5f0a8;border:1px solid #888"></div></div>
<div class="rr" style="top:92px"><div class="bx" style="left:2px;top:2px;width:15px;height:15px;background:#fff;border:1px solid #999;line-height:13px">19</div><span class="a" style="left:33px;top:3px">B</span><span class="a" style="left:44px;top:3px;background:#fff;padding:0 1px">佐賀</span><span class="a" style="left:67px;top:3px">1300</span><span class="a" style="left:96px;top:3px">4</span><div class="bx" style="left:109px;top:2px;width:14px;height:15px;background:#fff;border:1px solid #ccc;color:#f07a30">先</div><span class="a" style="left:130px;top:3px">5</span><div class="bx" style="left:143px;top:2px;width:8px;height:15px;background:#f9f3a0"></div><div class="bx" style="left:152px;top:2px;width:8px;height:15px;background:#eee;border:1px solid #888"></div></div>
<div class="rr" style="top:112px"><div class="bx" style="left:2px;top:2px;width:15px;height:15px;background:#fff;border:1px solid #999;line-height:13px">22</div><span class="a" style="left:33px;top:3px">B</span><span class="a" style="left:44px;top:3px;background:#fff;padding:0 1px">佐賀</span><span class="a" style="left:64px;top:3px;background:#fff;padding:0 2px">1400</span><div class="bx" style="left:90px;top:1px;width:19px;height:17px;background:#5a7a2e;color:#fff">3</div><div class="bx" style="left:109px;top:2px;width:14px;height:15px;background:#fff;border:1px solid #ccc;color:#f07a30">先</div><div class="bx grn" style="left:124px;top:1px;width:18px;height:17px;background:#e4e4f8">3</div><div class="bx" style="left:143px;top:2px;width:8px;height:15px;background:#f9f3a0"></div><div class="bx" style="left:152px;top:2px;width:8px;height:15px;background:#eee;border:1px solid #888"></div></div>
<div class="rr" style="top:132px"><div class="bx" style="left:2px;top:2px;width:15px;height:15px;background:#fff;border:1px solid #999;line-height:13px">10</div><span class="a" style="left:33px;top:3px">B</span><span class="a" style="left:44px;top:3px;background:#fff;padding:0 1px">佐賀</span><span class="a" style="left:67px;top:3px">1860</span><span class="a" style="left:96px;top:3px">5</span><div class="bx" style="left:109px;top:2px;width:14px;height:15px;background:#fff;border:1px solid #ccc;color:#f07a30">先</div><span class="a" style="left:130px;top:3px">6</span><div class="bx" style="left:143px;top:2px;width:8px;height:15px;background:#f9f3a0"></div></div>
</div>
<div class="st">
<span class="a" style="left:4px;top:5px">全:0-1-1-8</span>
<span class="a" style="left:4px;top:21px">場:0-1-1-4</span>
<span class="a" style="left:4px;top:38px">53.0</span><span class="a blue jk" style="left:29px;top:37px">林悠翔</span><div class="bx" style="left:59px;top:36px;width:19px;height:17px;background:#ddd">24</div>
<span class="a" style="left:4px;top:57px">佐賀</span><span class="a blue jk" style="left:31px;top:56px">真島二</span>
<span class="a" style="left:9px;top:74px;color:#777;font-size:7px">騎場&nbsp;&nbsp;&nbsp;&nbsp;&nbsp;&nbsp;騎厩&nbsp;&nbsp;&nbsp;&nbsp;&nbsp;&nbsp;厩場</span>
<span class="a" style="left:8px;top:84px">190</span><span class="a" style="left:39px;top:84px">2</span><span class="a" style="left:62px;top:84px">48</span>
<div style="position:absolute;left:2px;top:99px;width:76px;height:1px;background:#ddd"></div>
<span class="a" style="left:6px;top:102px">11.1</span><span class="a" style="left:39px;top:102px">0</span><span class="a" style="left:54px;top:101px;background:#8b1a1a;color:#fff;padding:1px 4px">27.1</span>
<span class="a" style="left:6px;top:121px">18.4</span><span class="a" style="left:39px;top:121px">0</span><span class="a" style="left:54px;top:120px;background:#8b1a1a;color:#fff;padding:1px 4px">41.7</span>
<span class="a" style="left:6px;top:140px">28.4</span><span class="a" style="left:39px;top:140px">0</span><span class="a" style="left:54px;top:139px;background:#f9b5d5;padding:1px 4px">58.3</span>
</div>
<div class="race" style="left:361px">
<span class="a" style="left:9px;top:7px">25-7/13</span><span class="a" style="left:50px;top:7px;background:#eee;padding:0 2px">佐賀9</span><span class="a" style="left:99px;top:7px">右 <b>1750</b></span><span class="a" style="left:147px;top:7px;color:#99c">稍</span>
<span class="a rn" style="left:9px;top:23px">❶ 文月（ふみつき）特 Ｂ</span><span class="a" style="left:149px;top:23px">曇</span>
<span class="a" style="left:9px;top:39px">9 <span class="sm">頭</span></span><span class="a" style="left:35px;top:39px">9 <span class="sm">番</span>○</span><span class="a" style="left:76px;top:39px">5<span class="sm">人</span></span><span class="a jk" style="left:89px;top:38px">山田貴</span><span class="a" style="left:121px;top:39px">56.0</span><div style="position:absolute;left:33px;top:52px;width:14px;height:2px;background:#f06cc8"></div>
<span class="a" style="left:10px;top:56px;font-size:17px;font-weight:bold">8</span>
<span class="a tm" style="left:34px;top:55px">1:57.3</span><span class="a" style="left:65px;top:56px">41.5</span><span class="a" style="left:104px;top:57px">-1.9</span>
<span class="a" style="left:128px;top:50px">564 0</span><div class="big">-4</div>
<span class="a" style="left:9px;top:78px">3.1</span>
<div class="cb cw" style="left:34px">8</div><div class="cb cw" style="left:51px">8</div><div class="cb cw" style="left:68px">8</div><div class="cb cw" style="left:85px">8</div><span class="a" style="left:103px;top:74px">⑧</span>
<span class="a" style="left:9px;top:95px">117.3</span><span class="a" style="left:47px;top:95px">後方外</span><span class="a" style="left:84px;top:95px">大型距離×</span>
<div class="res" style="background:#fdf3d7"><span class="a" style="left:4px;top:4px"><span class="blue">2</span> エスシーアルベル</span><span class="a" style="left:95px;top:4px">2 1 1</span><span class="a" style="right:4px;top:4px">1:54.2</span>
<span class="a" style="left:4px;top:18px"><span class="red">1</span> ボルネオ</span><span class="a" style="left:95px;top:18px">3 3 3</span><span class="a" style="right:12px;top:18px">4</span>
<span class="a" style="left:4px;top:32px">5 ロッソ</span><span class="a" style="left:95px;top:32px">7 4 4</span><span class="a" style="right:8px;top:32px">3/4</span></div>
</div>
<div class="race" style="left:526px">
<span class="a" style="left:9px;top:7px">25-6/22</span><span class="a" style="left:50px;top:7px;background:#eee;padding:0 2px">佐賀4</span><span class="a" style="left:99px;top:7px">右 <b>1300</b></span><span class="a" style="left:147px;top:7px;color:#888">良</span>
<span class="a rn" style="left:9px;top:23px">❷ あじさい特別Ｂ Ｂ</span><span class="a" style="left:140px;top:24px;font-size:9px">小雨</span>
<span class="a" style="left:9px;top:39px">11 <span class="sm">頭</span></span><span class="a" style="left:35px;top:39px">4 <span class="sm">番</span>注</span><span class="a" style="left:76px;top:39px">3<span class="sm">人</span></span><span class="a jk" style="left:89px;top:38px">山田貴</span><span class="a" style="left:121px;top:39px">56.0</span><div style="position:absolute;left:32px;top:52px;width:14px;height:2px;background:#2277cc"></div>
<div class="fin" style="background:#f9f06a;color:#333;font-weight:normal">4</div>
<span class="a tm" style="left:34px;top:55px">1:23.4</span><span class="a" style="left:65px;top:56px">38.3</span><div class="bx" style="left:97px;top:54px;width:22px;height:16px;background:#f7a8c8;border:1px solid #888;font-size:9px;line-height:14px">+1.0</div>
<span class="a" style="left:126px;top:50px">564 +2</span><div class="big">22</div>
<span class="a" style="left:9px;top:78px">0.9</span>
<div class="cb cw" style="left:34px">10</div><div class="cb cw" style="left:51px">10</div><div class="cb cw" style="left:68px">7</div><div class="cb cw" style="left:85px">6</div><span class="a red" style="left:103px;top:74px">❶</span>
<span class="a" style="left:9px;top:95px">83.4</span><span class="a" style="left:44px;top:95px">後方内</span><span class="a" style="left:84px;top:95px">Lv高R○</span>
<div class="res"><span class="a" style="left:4px;top:4px">- バイデンテソーロ</span><span class="a" style="left:93px;top:4px">2 1 1</span><span class="a" style="right:4px;top:4px">1:22.5</span>
<span class="a" style="left:4px;top:18px"><span class="red">1</span> ヘクトパスカル</span><span class="a" style="left:93px;top:18px">1 2 2</span><span class="a" style="right:12px;top:18px">4</span>
<span class="a" style="left:4px;top:32px">7 ハクアイリシャール</span><span class="a" style="left:93px;top:32px">4 4 4</span><span class="a" style="right:8px;top:32px">1/2</span></div>
</div>
<div class="race" style="left:691px;width:157px">
<span class="a" style="left:9px;top:7px">25-6/7</span><span class="a" style="left:50px;top:7px;background:#eee;padding:0 2px">佐賀4</span><span class="a" style="left:99px;top:7px">右 <b style="background:#fbf59a">1400</b></span><span class="a" style="left:142px;top:7px;color:#888">良</span>
<span class="a rn" style="left:9px;top:23px">❸ すずらん特別Ｂ Ｂ</span><span class="a" style="left:143px;top:23px">曇</span>
<span class="a" style="left:9px;top:39px">10 <span class="sm">頭</span></span><span class="a" style="left:35px;top:39px">5 <span class="sm">番</span>○</span><span class="a" style="left:72px;top:39px">2<span class="sm">人</span></span><span class="a jk" style="left:85px;top:38px">山田貴</span><span class="a" style="left:117px;top:39px">56.0</span><div style="position:absolute;left:32px;top:52px;width:14px;height:2px;background:#e8c000"></div>
<div class="fin" style="background:#1f8fc4">2</div>
<span class="a tm" style="left:34px;top:55px">1:30.7</span><span class="a" style="left:65px;top:56px">38.7</span><div class="bx" style="left:85px;top:56px;width:9px;height:15px;background:#f9f3a0"></div><div class="bx" style="left:94px;top:56px;width:22px;height:15px;background:#b5f0a8;border:1px solid #888;font-size:9px;line-height:13px">+0.2</div>
<span class="a" style="left:121px;top:50px">562 +3</span><div class="big" style="left:120px">21</div>
<span class="a" style="left:9px;top:78px">0.1</span>
<div class="cb cw" style="left:34px">5</div><div class="cb" style="left:51px">2</div><div class="cb" style="left:68px">3</div><div class="cb" style="left:85px">2</div><span class="a" style="left:102px;top:74px;color:#777">⑤</span>
<span class="a" style="left:7px;top:95px">*90.7</span><span class="a" style="left:40px;top:95px">躓も先団内</span><span class="a" style="left:95px;top:95px">次走○</span>
<div class="res" style="width:150px"><span class="a" style="left:4px;top:4px">4 ピーチボーイ</span><span class="a" style="left:90px;top:4px">5 2 1</span><span class="a" style="right:2px;top:4px">1:30.6</span>
<span class="a" style="left:4px;top:18px">4 <b class="blue">ルーパステソーロ</b></span><span class="a" style="left:90px;top:18px">2 3 2</span><span class="a" style="right:8px;top:18px">3/4</span>
<span class="a" style="left:4px;top:32px">9 モズタンジロウ</span><span class="a" style="left:90px;top:32px">7 6 5</span><span class="a" style="right:6px;top:32px">11/2</span></div>
</div>
</div>
<div class="sep" style="top:466px"></div>
</body></html>
